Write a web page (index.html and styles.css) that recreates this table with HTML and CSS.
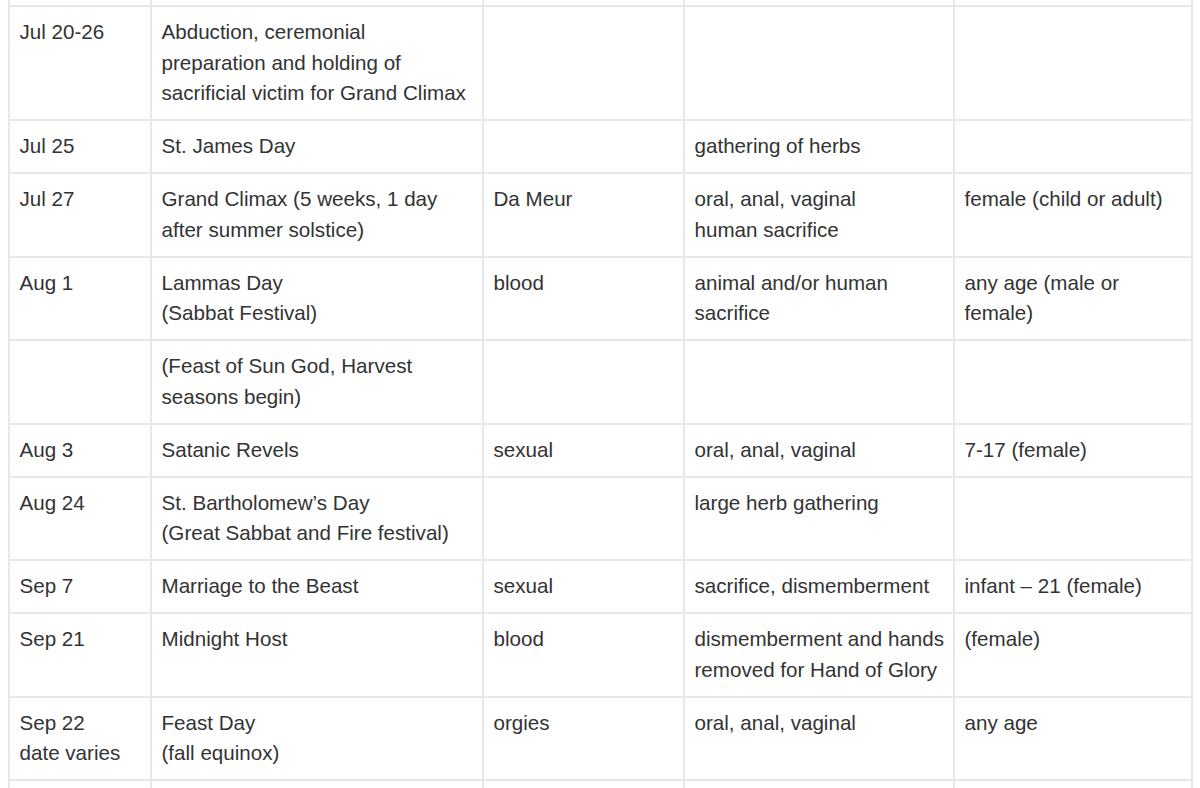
FILE: index.html
```html
<!DOCTYPE html>
<html>
<head>
<meta charset="utf-8">
<link rel="stylesheet" href="styles.css">
</head>
<body>
<table class="cal">
<colgroup>
<col class="c1"><col class="c2"><col class="c3"><col class="c4"><col class="c5">
</colgroup>
<tbody>
<tr class="spacer"><td></td><td></td><td></td><td></td><td></td></tr>
<tr><td>Jul 20-26</td><td>Abduction, ceremonial<br>preparation and holding of<br>sacrificial victim for Grand Climax</td><td></td><td></td><td></td></tr>
<tr><td>Jul 25</td><td>St. James Day</td><td></td><td>gathering of herbs</td><td></td></tr>
<tr><td>Jul 27</td><td>Grand Climax (5 weeks, 1 day<br>after summer solstice)</td><td>Da Meur</td><td>oral, anal, vaginal<br>human sacrifice</td><td>female (child or adult)</td></tr>
<tr><td>Aug 1</td><td>Lammas Day<br>(Sabbat Festival)</td><td>blood</td><td>animal and/or human<br>sacrifice</td><td>any age (male or<br>female)</td></tr>
<tr><td></td><td>(Feast of Sun God, Harvest<br>seasons begin)</td><td></td><td></td><td></td></tr>
<tr><td>Aug 3</td><td>Satanic Revels</td><td>sexual</td><td>oral, anal, vaginal</td><td>7-17 (female)</td></tr>
<tr><td>Aug 24</td><td>St. Bartholomew’s Day<br>(Great Sabbat and Fire festival)</td><td></td><td>large herb gathering</td><td></td></tr>
<tr><td>Sep 7</td><td>Marriage to the Beast</td><td>sexual</td><td>sacrifice, dismemberment</td><td>infant – 21 (female)</td></tr>
<tr><td>Sep 21</td><td>Midnight Host</td><td>blood</td><td>dismemberment and hands<br>removed for Hand of Glory</td><td>(female)</td></tr>
<tr><td>Sep 22<br>date varies</td><td>Feast Day<br>(fall equinox)</td><td>orgies</td><td>oral, anal, vaginal</td><td>any age</td></tr>
<tr class="tail"><td></td><td></td><td></td><td></td><td></td></tr>
</tbody>
</table>
</body>
</html>
```
FILE: styles.css
```css
html, body {
  margin: 0;
  padding: 0;
  background: #fff;
}
body {
  padding-left: 8px;
  font-family: "Liberation Sans", Arial, Helvetica, sans-serif;
  color: #333;
  overflow: hidden;
  height: 788px;
}
.cal {
  border-collapse: collapse;
  table-layout: fixed;
  width: 1183px;
  font-size: 20.6px;
  line-height: 30.5px;
}
.c1 { width: 142px; }
.c2 { width: 332px; }
.c3 { width: 201px; }
.c4 { width: 270px; }
.c5 { width: 238px; }
.cal td {
  border: 2px solid #e8e8e8;
  vertical-align: top;
  padding: 10px 4px 10.5px 9.5px;
  white-space: nowrap;
}
.cal tr.spacer td {
  padding: 0;
  height: 5px;
  line-height: 0;
  border-top: none;
}
.cal tr.tail td {
  height: 40px;
}
```
